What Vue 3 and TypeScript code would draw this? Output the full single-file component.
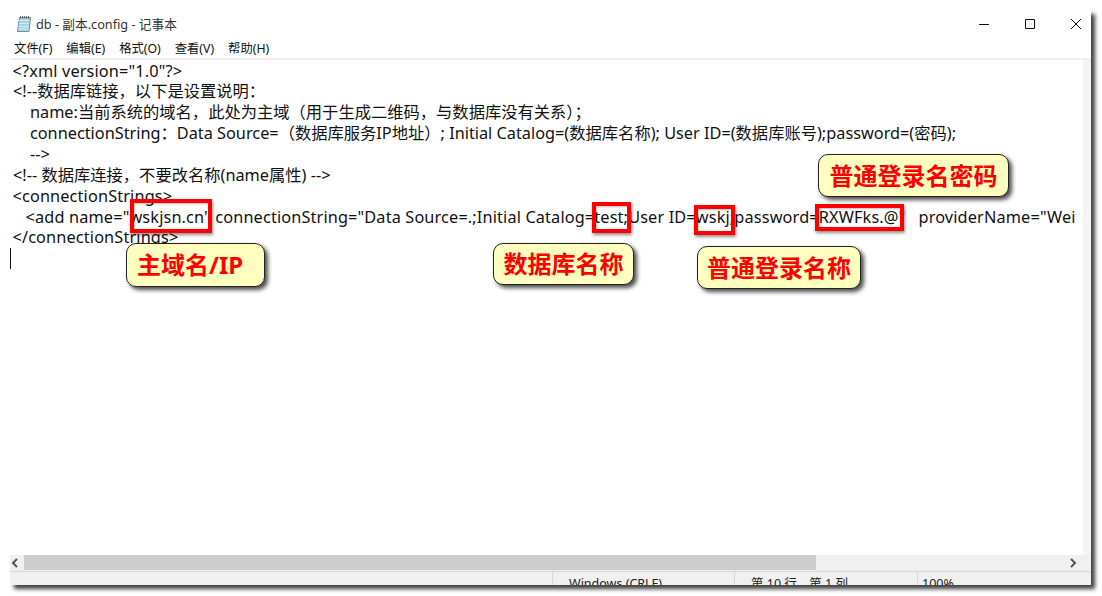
<script setup lang="ts">
interface Box { cls: string }
interface Note { cls: string; text: string }
interface Line { text: string; wide?: boolean }
const menus: string[] = ['文件(F)', '编辑(E)', '格式(O)', '查看(V)', '帮助(H)']
const lines: Line[] = [
  { text: '<?xml version="1.0"?>', wide: true },
  { text: '<!--数据库链接，以下是设置说明：' },
  { text: '    name:当前系统的域名，此处为主域（用于生成二维码，与数据库没有关系）；' },
  { text: '    connectionString：Data Source=（数据库服务IP地址）; Initial Catalog=(数据库名称); User ID=(数据库账号);password=(密码);' },
  { text: '    -->' },
  { text: '<!-- 数据库连接，不要改名称(name属性) -->' },
  { text: '<connectionStrings>', wide: true },
  { text: '   <add name="wskjsn.cn" connectionString="Data Source=.;Initial Catalog=test;User ID=wskj;password=RXWFks.@"   providerName="Wei', wide: true },
  { text: '</connectionStrings>', wide: true }
]
const boxes: Box[] = [{ cls: 'b1' }, { cls: 'b2' }, { cls: 'b3' }, { cls: 'b4' }]
const notes: Note[] = [
  { cls: 'n1', text: '主域名/IP' },
  { cls: 'n2', text: '数据库名称' },
  { cls: 'n3', text: '普通登录名称' },
  { cls: 'n4', text: '普通登录名密码' }
]
</script>

<template>
  <div class="page">
    <div class="window">
      <header class="titlebar">
        <svg class="appicon" width="16" height="18" viewBox="0 0 16 18">
          <path d="M3.5 2.5h11L13 16.5H1.5z" fill="#a6d3e6" stroke="#6f8f9d" stroke-width="1" />
          <path d="M3 5.5h10M3 8.5h10M2.5 11.5h10M2.5 14h10" stroke="#d4ebf4" stroke-width="1" />
          <path d="M4.5 1v2.5M6.5 1v2.5M8.5 1v2.5M10.5 1v2.5M12.5 1v2.5" stroke="#666" stroke-width="1" />
        </svg>
        <span class="title">db - 副本.config - 记事本</span>
        <div class="controls">
          <svg width="12" height="12" viewBox="0 0 12 12"><path d="M1 6.5h10" stroke="#111" /></svg>
          <svg width="12" height="12" viewBox="0 0 12 12"><path d="M1.5 1.5h9v9h-9z" fill="none" stroke="#111" /></svg>
          <svg width="12" height="12" viewBox="0 0 12 12"><path d="M1 1l10 10M11 1L1 11" stroke="#111" /></svg>
        </div>
      </header>
      <nav class="menubar">
        <span v-for="m in menus" :key="m">{{ m }}</span>
      </nav>
      <div class="editor-row">
        <main class="editor">
          <div v-for="(l, i) in lines" :key="i" class="line" :class="{ wide: l.wide }">{{ l.text }}</div>
          <div class="caret"></div>
          <div v-for="b in boxes" :key="b.cls" class="mark" :class="b.cls"></div>
          <div v-for="n in notes" :key="n.cls" class="note" :class="n.cls">{{ n.text }}</div>
        </main>
        <div class="vscroll"></div>
      </div>
      <div class="hscroll">
        <div class="arrow left">
          <svg width="8" height="10" viewBox="0 0 8 10"><path d="M6 1L2 5l4 4" fill="none" stroke="#555" stroke-width="2" /></svg>
        </div>
        <div class="track"><div class="thumb"></div></div>
        <div class="arrow right">
          <svg width="8" height="10" viewBox="0 0 8 10"><path d="M2 1l4 4-4 4" fill="none" stroke="#555" stroke-width="2" /></svg>
        </div>
      </div>
      <footer class="status">
        <div class="seg s0"></div>
        <div class="seg s1">Windows (CRLF)</div>
        <div class="seg s2">第 10 行，第 1 列</div>
        <div class="seg s3">100%</div>
      </footer>
    </div>
  </div>
</template>

<style>
html, body { margin: 0; background: #fff; }
</style>

<style scoped>
.page {
  width: 1102px;
  height: 596px;
  padding: 10px 11px 11px 10px;
  box-sizing: border-box;
  overflow: hidden;
  font-family: "Noto Sans", "Noto Sans CJK SC", sans-serif;
}
.window {
  height: 100%;
  display: flex;
  flex-direction: column;
  background: #fff;
  box-shadow: 4px 4px 4px rgba(0, 0, 0, 0.75);
  overflow: hidden;
}
.titlebar {
  height: 27px;
  display: flex;
  align-items: center;
  padding-left: 6px;
  flex: none;
}
.appicon { margin-right: 4px; }
.title { font-size: 12.7px; color: #333; }
.controls {
  margin-left: auto;
  display: flex;
  gap: 34px;
  padding-right: 9px;
}
.menubar {
  height: 20px;
  display: flex;
  align-items: center;
  gap: 14px;
  padding-left: 4px;
  margin-top: 1px;
  font-size: 12.3px;
  color: #111;
  flex: none;
}
.editor-row {
  flex: 1;
  display: flex;
  min-height: 0;
  border-top: 2px solid #f0f0f0;
}
.editor {
  flex: 1;
  position: relative;
  overflow: hidden;
  padding-top: 0.6px;
}
.line {
  height: 20.85px;
  line-height: 20.85px;
  padding-left: 3px;
  font-size: 16.3px;
  color: #111;
  white-space: pre;
}
.line.wide { letter-spacing: 0.14px; padding-left: 2.5px; }
.caret { width: 1px; height: 21px; background: #111; }
.vscroll { width: 8px; background: #f4f4f4; flex: none; }
.mark {
  position: absolute;
  border: 4px solid #f00;
  box-sizing: border-box;
  box-shadow: 1px 2px 3px rgba(0, 0, 0, 0.45), inset 1px 1px 2px rgba(0, 0, 0, 0.25);
}
.b1 { left: 120px; top: 139px; width: 82px; height: 34px; }
.b2 { left: 582px; top: 142px; width: 39px; height: 31px; }
.b3 { left: 684px; top: 145px; width: 41px; height: 30px; }
.b4 { left: 805px; top: 144px; width: 89px; height: 27px; }
.note {
  position: absolute;
  box-sizing: border-box;
  background: #ffffc0;
  border: 1px solid #222;
  border-radius: 10px;
  box-shadow: 3px 3px 4px rgba(0, 0, 0, 0.7);
  color: #f00;
  font-weight: 700;
  font-size: 24px;
  display: flex;
  align-items: center;
  justify-content: center;
  white-space: nowrap;
  padding-bottom: 3px;
}
.n1 { left: 116px; top: 183px; width: 139px; height: 44px; justify-content: flex-start; padding-left: 10px; }
.n2 { left: 483px; top: 183px; width: 141px; height: 42px; }
.n3 { left: 687px; top: 186px; width: 164px; height: 43px; }
.n4 { left: 808px; top: 94px; width: 191px; height: 43px; }
.hscroll {
  height: 15px;
  display: flex;
  flex: none;
  background: #f0f0f0;
}
.arrow {
  display: flex;
  align-items: center;
  justify-content: center;
  flex: none;
}
.arrow.left { width: 10px; margin-right: 4px; }
.arrow.right { width: 14px; margin-left: 0; margin-right: 11px; }
.track { flex: 1; background: #f0f0f0; }
.thumb { width: 792px; height: 100%; background: #cdcdcd; }
.status {
  height: 13px;
  flex: none;
  display: flex;
  background: #f0f0f0;
  border-top: 1px solid #d7d7d7;
  box-shadow: 0 -1px 0 #f0f0f0;
  margin-top: 1px;
  font-size: 12.5px;
  color: #222;
  overflow: hidden;
  line-height: 24px;
}
.seg { box-sizing: border-box; white-space: nowrap; padding-left: 4px; border-left: 1px solid #d7d7d7; }
.s0 { width: 542px; border-left: none; }
.s1 { width: 182px; padding-left: 16px; }
.s2 { width: 183px; padding-left: 16px; }
.s3 { flex: 1; }
</style>
